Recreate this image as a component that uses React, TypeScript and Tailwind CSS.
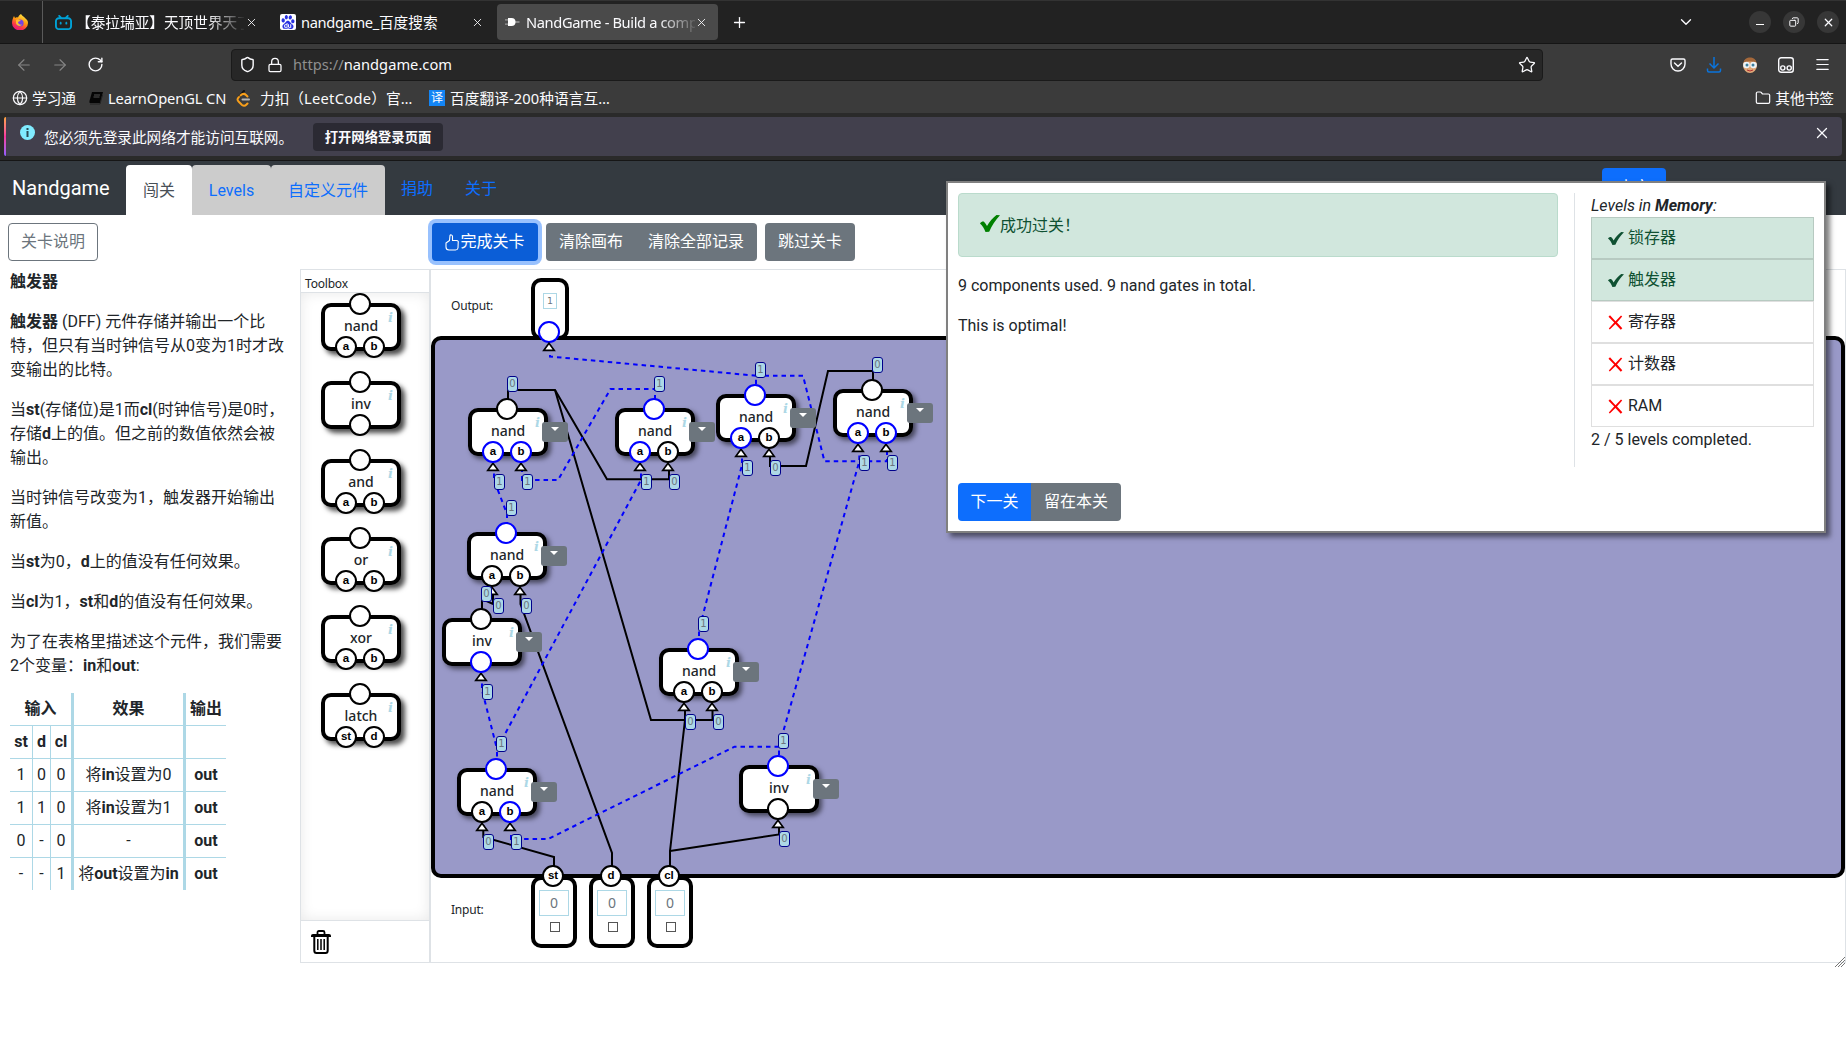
import React from "react";
import { SiBilibili, SiBaidu } from "react-icons/si";
import {
  ArrowLeft,
  ArrowRight,
  RotateCw,
  Shield,
  Lock,
  Star,
  Plus,
  X,
  ChevronDown,
  Globe,
  Folder,
  Menu,
  Copy,
} from "lucide-react";

const UI = "font-['Noto_Sans','Noto_Sans_CJK_SC',sans-serif]";
const BODY = "font-[Roboto,'Noto_Sans_CJK_SC',sans-serif]";

function FirefoxIcon() {
  return (
    <svg width="16" height="16" viewBox="0 0 16 16">
      <defs>
        <linearGradient id="fx" x1="0.8" y1="0" x2="0.3" y2="1">
          <stop offset="0" stopColor="#fff44f" />
          <stop offset="0.45" stopColor="#ff980e" />
          <stop offset="0.75" stopColor="#ff3647" />
          <stop offset="1" stopColor="#e31587" />
        </linearGradient>
      </defs>
      <path d="M9 0c1 2 3 2.500 4 4 2 1.500 3 3 3 5a8 7.500 0 0 1-16 0C0 6 1 4 2 2l1 2c1-.8 2-.8 3-.5C6.500 2 7.500 1 9 0z" fill="url(#fx)" />
      <circle cx="8" cy="9" r="3.600" fill="#7542e5" />
      <path d="M4 6c2-1 3 0 5 .5-1 .8-2 1-3 1.500 0 2 2 3 4 2.500-1 2-5 2-6-1z" fill="#ffbd2e" />
    </svg>
  );
}

function PlugIcon() {
  return (
    <svg width="16" height="16" viewBox="0 0 16 16">
      <path d="M1 5.800h4M1 10.200h4M11 8h4.500" stroke="#9a9a9a" strokeWidth="1.300" />
      <path d="M4 4h3.500a4 4 0 0 1 0 8H4z" fill="#fff" />
    </svg>
  );
}

function LeetIcon() {
  return (
    <svg width="15" height="17" viewBox="0 0 15 17" fill="none" strokeWidth="2" strokeLinecap="round">
      <path d="M8 1 3 7" stroke="#111" />
      <path d="M3 7c-2 2-2 3 0 5l3 3c1.500 1 3 1 4.500-.5l1-1" stroke="#f89f1b" />
      <path d="M4.500 5.500c2-2 4-2 5.500-.5l1.500 1.500" stroke="#f89f1b" />
      <path d="M6.500 9.500H13" stroke="#b3b3b3" />
    </svg>
  );
}

function FaceIcon() {
  return (
    <svg width="16" height="16" viewBox="0 0 16 16">
      <ellipse cx="8" cy="8.500" rx="7" ry="7.500" fill="#e0a878" />
      <path d="M1.500 6C2 2 5 .5 8 .5S14 2 14.500 6C11 4 5 4 1.500 6z" fill="#a5683a" />
      <circle cx="4.500" cy="8" r="3.300" fill="#eef4f8" />
      <circle cx="11.500" cy="8" r="3.300" fill="#eef4f8" />
      <circle cx="5" cy="8" r="1.500" fill="#3d7f9c" />
      <circle cx="11" cy="8" r="1.500" fill="#3d7f9c" />
      <path d="M5 13q3 2 6 0" stroke="#b03030" fill="none" />
    </svg>
  );
}

function ThumbIcon() {
  return (
    <svg width="14" height="17" viewBox="0 0 14 17" fill="none" stroke="currentColor" strokeWidth="1.100" strokeLinejoin="round">
      <path d="M1 9 4.500 6.500 5 1.500C5.300.6 7.500.6 7.500 2.500V6.500h4c1.800 0 2 1.300 1.700 2.200l-.2 5.300c-.2 1.300-1 2-2.500 2H4C2 16 1 15 1 13z" />
    </svg>
  );
}

function CheckIcon({ w, h, color }: { w: number; h: number; color: string }) {
  return (
    <svg width={w} height={h} viewBox="0 0 20 17" preserveAspectRatio="none">
      <path d="M0 8.500C1.500 6.500 3.200 6 4.200 7 5.500 8.300 6.300 9.700 7 11 9.500 6.500 13 2.500 16.500 0L20 .3C15.500 5 11.800 10.500 9.200 16.700L5.500 17C4.200 13.500 2.500 10.500 0 8.500z" fill={color} />
    </svg>
  );
}

function CrossIcon() {
  return (
    <svg width="15" height="15" viewBox="0 0 15 15">
      <path d="M.5 1.800 2 .3 7.500 6.200 13 .5l1.200 1L9 7.500l5.300 5.800-1.500 1.400L7.400 9 1.800 14.500.8 13.500 6.200 7.500z" fill="#f00" />
    </svg>
  );
}

function TrashIcon() {
  return (
    <svg width="20" height="24" viewBox="0 0 20 24" fill="none" stroke="#000">
      <path d="M6.500 4V2.500Q6.500 1 8 1h4q1.500 0 1.500 1.500V4" strokeWidth="1.800" />
      <path d="M0 7V5.500Q0 4 2 4h16q2 0 2 1.500V7z" fill="#000" stroke="none" />
      <path d="M3.300 7v13.500Q3.300 23 5.500 23h9q2.200 0 2.200-2.500V7" strokeWidth="2" />
      <path d="M6.800 9v11M10 9v11M13.200 9v11" strokeWidth="1.500" />
    </svg>
  );
}

function TabStrip() {
  return (
    <div className="flex h-[44px] items-center border-t border-b border-t-[#333] border-b-[#151515] bg-[#222] text-[14.67px] text-[#fbfbfe]">
      <div className="flex h-full w-[43px] items-center justify-center border-r border-[#5a5a5a] pr-[2px]">
        <FirefoxIcon />
      </div>
      <div className="flex w-[228px] items-center pl-[12px]">
        <SiBilibili size={17} color="#00a1d6" className="shrink-0" />
        <div className="ml-[4px] w-[168px] overflow-hidden whitespace-nowrap [mask-image:linear-gradient(to_right,#000_132px,transparent_170px)]">
          【泰拉瑞亚】天顶世界天丁
        </div>
        <X size={13} strokeWidth={1.6} className="ml-px shrink-0" />
      </div>
      <div className="flex w-[226px] items-center pl-[9px]">
        <div className="flex h-[16px] w-[16px] items-center justify-center rounded-[2px] bg-white">
          <SiBaidu size={14} color="#2932e1" />
        </div>
        <div className="ml-[5px] w-[170px] whitespace-nowrap">
          <span className="tracking-[-0.35px]">nandgame_</span>百度搜索
        </div>
        <X size={13} strokeWidth={1.6} className="shrink-0" />
      </div>
      <div className="flex h-[36px] w-[221px] items-center rounded-[4px] bg-[#4a4a4a] pl-[7px]">
        <PlugIcon />
        <div className="ml-[6px] w-[169px] overflow-hidden whitespace-nowrap tracking-[-0.38px] [mask-image:linear-gradient(to_right,#000_132px,transparent_174px)]">
          NandGame - Build a comp
        </div>
        <X size={13} strokeWidth={1.6} className="shrink-0" />
      </div>
      <Plus size={17} strokeWidth={1.8} className="ml-[13px]" />
      <div className="ml-auto flex items-center pr-[7px]">
        <ChevronDown size={18} strokeWidth={1.8} className="mr-[54px]" />
        <div className="flex gap-[12px]">
          <div className="flex h-[22px] w-[22px] items-center justify-center rounded-full bg-[#373737]">
            <div className="mt-[5px] h-px w-[8px] bg-white" />
          </div>
          <div className="flex h-[22px] w-[22px] items-center justify-center rounded-full bg-[#373737]">
            <Copy size={10} strokeWidth={2.4} className="-scale-x-100" />
          </div>
          <div className="flex h-[22px] w-[22px] items-center justify-center rounded-full bg-[#373737]">
            <X size={13} strokeWidth={2.2} />
          </div>
        </div>
      </div>
    </div>
  );
}

function Toolbar() {
  return (
    <div className="flex h-[41px] items-center bg-[#3b3b3b] text-[14.67px] text-[#fbfbfe]">
      <div className="flex w-[231px] gap-[18px] pl-[15px]">
        <ArrowLeft size={18} strokeWidth={1.5} color="#858585" />
        <ArrowRight size={18} strokeWidth={1.5} color="#858585" />
        <RotateCw size={17} strokeWidth={2} />
      </div>
      <div className="flex h-[32px] w-[1312px] items-center rounded-[4px] border border-[#1a1a1a] bg-[#272727] pl-[7px] pr-[6px]">
        <Shield size={17} strokeWidth={2} />
        <Lock size={16} strokeWidth={1.9} className="ml-[11px]" />
        <div className="ml-[10px] pb-[2px] tracking-[0.02px]">
          <span className="text-[#8f8f8f]">https://</span>nandgame.com
        </div>
        <Star size={18} strokeWidth={1.7} className="ml-auto" />
      </div>
      <div className="ml-auto flex items-center gap-[20px] pr-[15px]">
        <svg width="16" height="16" viewBox="0 0 16 16" fill="none" stroke="currentColor" strokeWidth="1.400">
          <path d="M2.500 2h11q1.500 0 1.500 1.500V7a7 7 0 0 1-14 0V3.500Q1 2 2.500 2z" />
          <path d="M4.500 6 8 9.300 11.500 6" strokeLinecap="round" />
        </svg>
        <svg width="16" height="16" viewBox="0 0 16 16" fill="none" stroke="#0a74dd" strokeWidth="1.500">
          <path d="M8 0v10.500M3.500 6.500 8 11l4.500-4.500M1.500 11.500v2q0 1.500 1.500 1.500h10q1.500 0 1.500-1.500v-2" />
        </svg>
        <FaceIcon />
        <svg width="16" height="16" viewBox="0 0 16 16" fill="none" stroke="currentColor" strokeWidth="1.400">
          <rect x="0.700" y="0.700" width="14.600" height="14.600" rx="2.500" />
          <circle cx="4.800" cy="11" r="2.100" />
          <circle cx="11.200" cy="11" r="2.100" />
        </svg>
        <Menu size={17} strokeWidth={1.7} />
      </div>
    </div>
  );
}

function Bookmarks() {
  return (
    <div className="flex h-[28px] items-center whitespace-nowrap bg-[#3b3b3b] pr-[12px] pb-[2px] pl-[12px] text-[14.67px] text-[#fbfbfe]">
      <Globe size={16} strokeWidth={1.8} />
      <span className="ml-[4px] w-[56px]">学习通</span>
      <svg width="14" height="13" viewBox="0 0 14 13" className="ml-[1px]">
        <path d="M3 0h11l-3 11H1Q0 11 .5 9z" fill="#050505" />
        <path d="M1 12h10l2.500-9" stroke="#222" fill="none" />
        <path d="M5 3h6M4.500 5h6" stroke="#555" />
      </svg>
      <span className="ml-[5px] w-[128px] tracking-[-0.1px]">LearnOpenGL CN</span>
      <LeetIcon />
      <span className="ml-[9px] w-[169px]">
        力扣（<span className="tracking-[0.3px]">LeetCode</span>）官…
      </span>
      <div className="flex h-[16px] w-[16px] items-center justify-center bg-[#1385f5] text-[12px]">译</div>
      <span className="ml-[5px] tracking-[0.1px]">百度翻译-200种语言互…</span>
      <Folder size={16} strokeWidth={1.8} className="ml-auto" />
      <span className="ml-[4px]">其他书签</span>
    </div>
  );
}

function Notice() {
  return (
    <div className="h-[48px] border-b border-[#161616] bg-[#2a2a2a] px-[4px] pt-[4px]">
      <div className="flex h-[39px] rounded-[4px] bg-[#42404d] text-[14.67px] text-[#fbfbfe]">
        <div className="w-[2px] rounded-l bg-linear-to-b from-[#ffa436] via-[#f7349e] to-[#9059ff]" />
        <div className="mt-[8px] ml-[14px] flex h-[15px] w-[15px] items-center justify-center rounded-full bg-[#80ebff]">
          <svg width="3" height="9" viewBox="0 0 3 9">
            <path d="M.5 0h2v2h-2zM.5 3h2v6h-2z" fill="#2b4a55" />
          </svg>
        </div>
        <div className="ml-[9px] w-[269px] whitespace-nowrap leading-[40px]">您必须先登录此网络才能访问互联网。</div>
        <div className="mt-[6px] flex h-[28px] w-[130px] items-center justify-center rounded-[4px] bg-[#2b2a33] pt-px text-[13.33px] font-bold">
          打开网络登录页面
        </div>
        <X size={18} strokeWidth={1.7} className="mt-[7px] mr-[11px] ml-auto" />
      </div>
    </div>
  );
}

function NavBar() {
  return (
    <div className="flex h-[54px] bg-[#343a40] pl-[12px] text-[16px] leading-[24px] text-[#0d6efd]">
      <div className="w-[114px] pt-[12px] text-[20px] leading-[30px] text-white">Nandgame</div>
      <div className="mt-[4px] w-[66px] rounded-t-[4px] bg-white pt-[14px] text-center text-[#495057]">闯关</div>
      <div className="mt-[4px] w-[79px] rounded-t-[4px] bg-[#ccc] pt-[14px] text-center">Levels</div>
      <div className="mt-[4px] w-[114px] rounded-t-[4px] bg-[#ccc] pt-[14px] text-center">自定义元件</div>
      <div className="w-[64px] pt-[16px] text-center">捐助</div>
      <div className="w-[64px] pt-[16px] text-center">关于</div>
      <div className="mt-[7px] mr-[180px] ml-auto h-[38px] w-[64px] rounded-[4px] bg-[#0d6efd] pt-[8px] text-center text-white">中文</div>
    </div>
  );
}

const cellBase = "flex items-center justify-center border-[#add8e6] ";
const rows: React.ReactNode[][] = [
  ["1", "0", "0", <>将<b>in</b>设置为0</>, <b>out</b>],
  ["1", "1", "0", <>将<b>in</b>设置为1</>, <b>out</b>],
  ["0", "-", "0", "-", <b>out</b>],
  ["-", "-", "1", <>将<b>out</b>设置为<b>in</b></>, <b>out</b>],
];

function TruthTable() {
  return (
    <div className="-mt-px grid w-[216px] grid-cols-[23px_18px_23px_112px_40px] grid-rows-[33px_33px_33px_33px_33px_32px]">
      <div className={cellBase + "col-span-3 border-r-3 border-b font-bold"}>输入</div>
      <div className={cellBase + "border-r-3 border-b font-bold"}>效果</div>
      <div className={cellBase + "border-b font-bold"}>输出</div>
      <div className={cellBase + "border-r border-b font-bold"}>st</div>
      <div className={cellBase + "border-r border-b font-bold"}>d</div>
      <div className={cellBase + "border-r-3 border-b font-bold"}>cl</div>
      <div className={cellBase + "border-r-3 border-b"} />
      <div className={cellBase + "border-b"} />
      {rows.map((r, i) =>
        r.map((c, j) => (
          <div
            key={i + "-" + j}
            className={
              cellBase +
              (i < 3 ? "border-b " : "") +
              (j < 2 ? "border-r" : j < 4 ? "border-r-3" : "")
            }
          >
            <span className="whitespace-nowrap">{c}</span>
          </div>
        ))
      )}
    </div>
  );
}

function Description() {
  return (
    <div className="flex w-[300px] shrink-0 flex-col gap-[16px] whitespace-nowrap pt-px pl-[10px] text-[16px] leading-[24px]">
      <p><b>触发器</b></p>
      <p>
        <b>触发器</b> (DFF) 元件存储并输出一个比<br />特，但只有当时钟信号从0变为1时才改<br />变输出的比特。
      </p>
      <p>
        当<b>st</b>(存储位)是1而<b>cl</b>(时钟信号)是0时，<br />存储<b>d</b>上的值。但之前的数值依然会被<br />输出。
      </p>
      <p>当时钟信号改变为1，触发器开始输出<br />新值。</p>
      <p>当<b>st</b>为0，<b>d</b>上的值没有任何效果。</p>
      <p>当<b>cl</b>为1，<b>st</b>和<b>d</b>的值没有任何效果。</p>
      <p>为了在表格里描述这个元件，我们需要<br />2个变量：<b>in</b>和<b>out</b>:</p>
      <TruthTable />
    </div>
  );
}

type PinProps = { x: number; y: number; on?: boolean; label?: string };
function Pin({ x, y, on, label }: PinProps) {
  return (
    <div
      style={{ left: x - 11, top: y - 11 }}
      className={
        "absolute flex h-[22px] w-[22px] items-center justify-center rounded-full border-2 bg-white font-['Liberation_Sans',sans-serif] text-[11.5px] leading-none font-bold text-black " +
        (on ? "border-[#0000ff]" : "border-black")
      }
    >
      {label}
    </div>
  );
}

function Tag({ x, y, v }: { x: number; y: number; v: number }) {
  return (
    <div
      style={{ left: x, top: y }}
      className="absolute flex h-[16px] w-[11px] items-center justify-center rounded-[3px] border border-[#00008b] bg-[#add8e6] font-['DejaVu_Sans',sans-serif] text-[10px] leading-none text-[#6c757d]"
    >
      {v}
    </div>
  );
}

function Arrow({ x, y }: { x: number; y: number }) {
  return (
    <svg width="16" height="10" viewBox="0 0 16 10" className="absolute" style={{ left: x - 8, top: y }}>
      <path d="M8 1.200 13.200 8.300H2.800z" fill="#fff" stroke="#000" strokeWidth="1.700" />
    </svg>
  );
}

type Gate = {
  x: number;
  y: number;
  name: string;
  out?: number;
  ins: { label?: string; v?: number }[];
};

function GateView({ g, placed }: { g: Gate; placed?: boolean }) {
  const xs = g.ins.length === 1 ? [39] : [25, 53];
  return (
    <div className="absolute h-[48px] w-[80px]" style={{ left: g.x, top: g.y }}>
      <div
        className={
          "relative h-[48px] w-[80px] rounded-[10px] border-4 border-black bg-white " +
          (placed ? "shadow-[3px_3px_5px_rgba(0,0,0,0.55)]" : "shadow-[4px_4px_5px_rgba(0,0,0,0.7)]")
        }
      >
        <div className="pt-[8px] text-center font-['Noto_Sans',sans-serif] text-[14px] leading-[22px] font-medium text-[#212529]">
          {g.name}
        </div>
        <div className="absolute top-[2px] right-[4px] font-['DejaVu_Serif',serif] text-[13px] leading-[18px] font-bold text-[#add8e6] italic">i</div>
      </div>
      {placed && (
        <div className="absolute top-[14px] left-[74px] flex h-[20px] w-[26px] justify-center rounded-[3px] bg-[#6c757d] pt-[5px]">
          <div className="h-0 w-0 border-x-4 border-t-4 border-x-transparent border-t-white" />
        </div>
      )}
      <Pin x={39} y={1} on={g.out === 1} />
      {g.out !== undefined && <Tag x={39} y={-32} v={g.out} />}
      {g.ins.map((p, i) => (
        <React.Fragment key={i}>
          {placed && <Arrow x={xs[i]} y={54} />}
          <Pin x={xs[i]} y={44} on={p.v === 1} label={p.label} />
          {p.v !== undefined && <Tag x={xs[i] + 1} y={66} v={p.v} />}
        </React.Fragment>
      ))}
    </div>
  );
}

const ab = [{ label: "a" }, { label: "b" }];
const toolboxGates: Gate[] = [
  { x: 20, y: 10, name: "nand", ins: ab },
  { x: 20, y: 88, name: "inv", ins: [{}] },
  { x: 20, y: 166, name: "and", ins: ab },
  { x: 20, y: 244, name: "or", ins: ab },
  { x: 20, y: 322, name: "xor", ins: ab },
  { x: 20, y: 400, name: "latch", ins: [{ label: "st" }, { label: "d" }] },
];

function io(a: number, b: number) {
  return [{ label: "a", v: a }, { label: "b", v: b }];
}
const gates: Gate[] = [
  { x: 37, y: 138, name: "nand", out: 0, ins: io(1, 1) },
  { x: 184, y: 138, name: "nand", out: 1, ins: io(1, 0) },
  { x: 285, y: 124, name: "nand", out: 1, ins: io(1, 0) },
  { x: 402, y: 119, name: "nand", out: 0, ins: io(1, 1) },
  { x: 36, y: 262, name: "nand", out: 1, ins: io(0, 0) },
  { x: 11, y: 348, name: "inv", out: 0, ins: [{ v: 1 }] },
  { x: 228, y: 378, name: "nand", out: 1, ins: io(0, 0) },
  { x: 26, y: 498, name: "nand", out: 1, ins: io(0, 1) },
  { x: 308, y: 495, name: "inv", out: 1, ins: [{ v: 0 }] },
];

const liveWires = [
  "M550 355V356.500L756 375.700V395",
  "M756 375.700H803L824.500 461.300H887V447",
  "M859.300 447V461.300L779 746.700V766",
  "M742 450V465L699 630V648",
  "M655 408V389H610.500L558 480H522V465",
  "M494 465V480L507 514V532",
  "M641 465V480L497 749V768",
  "M482 675V690L497 749",
  "M779 746.700H734.500L548 839H511V822",
];
const idleWires = [
  "M508 400V390H555L607 479.300H669V465",
  "M555 390 651 720H712.500V705",
  "M873 385V371H828L806 466H770V450",
  "M482 610V599L493 604V590",
  "M520.500 590V604L612 853V868",
  "M685 705V720L670 851V868",
  "M779 822V834.500L670 851",
  "M483.300 825V837L554 857V868",
];

function Toolbox() {
  return (
    <div className="flex w-[130px] shrink-0 flex-col border border-[#dee2e6]">
      <div className="h-[23px] border-b border-[#dee2e6] pt-[5px] pl-[4px] font-['Noto_Sans',sans-serif] text-[12px] leading-[18px] tracking-[-0.2px]">
        Toolbox
      </div>
      <div className="relative h-[627px] shadow-[inset_0_0_14px_rgba(0,0,0,0.09)]">
        {toolboxGates.map((g) => (
          <GateView key={g.name} g={g} />
        ))}
      </div>
      <div className="flex-1 border-t border-[#dee2e6] pt-[9px] pl-[10px]">
        <TrashIcon />
      </div>
    </div>
  );
}

function InputNode({ label, x }: { label: string; x: number }) {
  return (
    <div style={{ left: x, top: 606 }} className="absolute flex h-[72px] w-[46px] flex-col items-center rounded-[10px] border-4 border-black bg-white pt-[10px]">
      <div className="flex h-[26px] w-[30px] items-center justify-center border border-[#add8e6] pb-px font-['Noto_Sans',sans-serif] text-[14px] text-[#6c757d]">0</div>
      <div className="mt-[6px] ml-px h-[10px] w-[10px] border border-[#555]" />
      <Pin x={18} y={-4} label={label} />
    </div>
  );
}

function CanvasPanel() {
  return (
    <div className="relative h-[694px] w-[1416px] border border-[#dee2e6]">
      <div className="absolute top-[27px] left-[20px] font-['Noto_Sans',sans-serif] text-[12px] leading-[18px] tracking-[-0.2px]">Output:</div>
      <div className="absolute top-[631px] left-[20px] font-['Noto_Sans',sans-serif] text-[12px] leading-[18px] tracking-[-0.2px]">Input:</div>
      <div className="absolute top-[8px] left-[100px] h-[62px] w-[38px] rounded-[10px] border-4 border-black bg-white">
        <div className="mt-[11px] ml-[8px] flex h-[16px] w-[14px] items-center justify-center border border-[#add8e6] font-['DejaVu_Sans',sans-serif] text-[9.500px] text-[#6c757d]">1</div>
      </div>
      <div className="absolute top-[66px] left-0 h-[542px] w-[1414px] rounded-[10px] border-4 border-black bg-[#9999c8]" />
      <svg className="absolute top-0 left-0" width="1414" height="692" viewBox="431 270 1414 692" fill="none" strokeWidth="2">
        {idleWires.map((d) => (
          <path key={d} d={d} stroke="#000" />
        ))}
        {liveWires.map((d) => (
          <path key={d} d={d} stroke="#0000ff" strokeDasharray="4.500 4" />
        ))}
      </svg>
      {gates.map((g, i) => (
        <GateView key={i} g={g} placed />
      ))}
      <Pin x={118} y={62} on />
      <Arrow x={118} y={72} />
      <InputNode label="st" x={100} />
      <InputNode label="d" x={158} />
      <InputNode label="cl" x={216} />
      <svg className="absolute right-0 -bottom-[5px]" width="10" height="10" viewBox="0 0 10 10" stroke="#777" strokeWidth="1">
        <path d="M0 10 10 0M3 10 10 3M6 10 10 6" />
      </svg>
    </div>
  );
}

const levels = [
  { name: "锁存器", done: true },
  { name: "触发器", done: true },
  { name: "寄存器", done: false },
  { name: "计数器", done: false },
  { name: "RAM", done: false },
];

function ResultDialog() {
  return (
    <div className="absolute top-[181px] left-[946px] h-[352px] w-[880px] border-2 border-[#808080] bg-white p-[10px] text-[16px] leading-[24px] shadow-[4px_4px_5px_rgba(0,0,0,0.5)]">
      <div className="flex h-[274px]">
        <div className="flex w-[616px] flex-col">
          <div className="flex h-[64px] w-[600px] items-center rounded-[4px] border border-[#badbcc] bg-[#d1e7dd] pt-px pl-[21px] text-[#0f5132]">
            <div className="-mt-[4px]"><CheckIcon w={20} h={17} color="#008000" /></div>
            <span>成功过关！</span>
          </div>
          <p className="mt-[17px]">9 components used. 9 nand gates in total.</p>
          <p className="mt-[16px]">This is optimal!</p>
        </div>
        <div className="w-[240px] border-l border-[#dee2e6] pl-[16px]">
          <p className="-mb-px pt-px italic">Levels in <b>Memory</b>:</p>
          <div className="w-[223px]">
            {levels.map((l) => (
              <div
                key={l.name}
                className={
                  "flex h-[42px] items-center gap-[5px] border pl-[16px] " +
                  (l.done ? "border-[#b7cac1] bg-[#d1e7dd] text-[#0f5132]" : "border-[#dfdfdf]")
                }
              >
                {l.done ? <CheckIcon w={16} h={13} color="#0f5132" /> : <CrossIcon />}
                <span className={l.done ? "-ml-px" : ""}>{l.name}</span>
              </div>
            ))}
          </div>
          <p className="pt-px">2 / 5 levels completed.</p>
        </div>
      </div>
      <div className="mt-[16px] flex h-[38px] leading-[38px] text-white">
        <div className="w-[73px] rounded-l-[4px] bg-[#0d6efd] text-center">下一关</div>
        <div className="w-[90px] rounded-r-[4px] bg-[#6c757d] text-center">留在本关</div>
      </div>
    </div>
  );
}

function Actions() {
  return (
    <div className="flex h-[54px] pt-[8px] pl-[8px] text-[16px] leading-[36px] text-white">
      <div className="h-[38px] w-[90px] rounded-[4px] border border-[#6c757d] text-center text-[#6c757d]">关卡说明</div>
      <div className="ml-[334px] flex h-[38px] w-[106px] items-center justify-center rounded-[4px] bg-[#0b5ed7] ring-4 ring-[#98c1fe]">
        <ThumbIcon />
        <span className="ml-[1px]">完成关卡</span>
      </div>
      <div className="ml-[8px] flex h-[38px] w-[211px] rounded-[4px] bg-[#6c757d] pt-px pl-[13px]">
        <span className="w-[89px]">清除画布</span>
        <span>清除全部记录</span>
      </div>
      <div className="ml-[8px] h-[38px] w-[90px] rounded-[4px] bg-[#6c757d] pt-px text-center">跳过关卡</div>
    </div>
  );
}

export default function App() {
  return (
    <div className="relative h-[1053px] w-[1846px] overflow-hidden bg-white text-[#212529]">
      <div className={UI}>
        <TabStrip />
        <Toolbar />
        <Bookmarks />
        <Notice />
      </div>
      <div className={BODY}>
        <NavBar />
        <Actions />
        <div className="flex h-[694px]">
          <Description />
          <Toolbox />
          <CanvasPanel />
        </div>
        <ResultDialog />
      </div>
    </div>
  );
}
